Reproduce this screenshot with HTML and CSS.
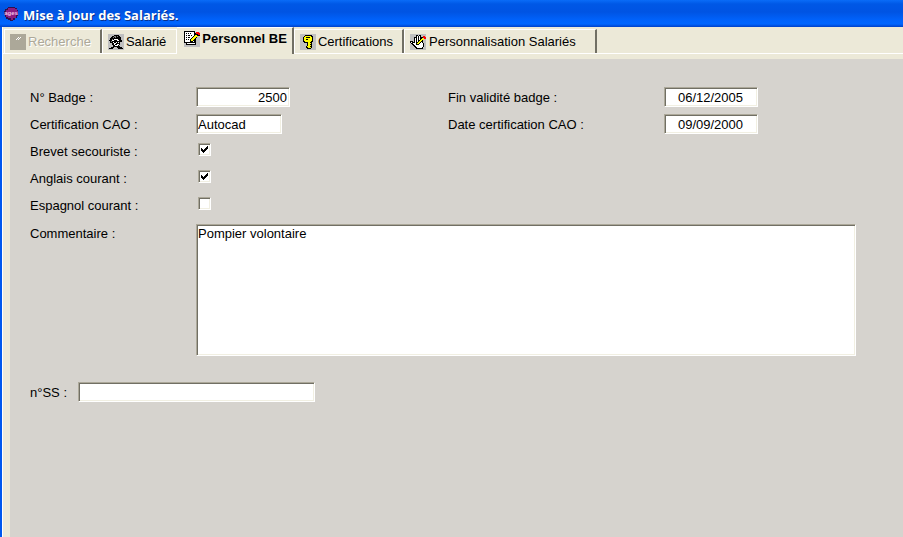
FILE: index.html
```html
<!DOCTYPE html>
<html lang="fr">
<head>
  <meta charset="UTF-8" />
  <meta name="viewport" content="width=device-width, initial-scale=1.0"/>
  <title>Mise à Jour des Salariés.</title>
  <link rel="stylesheet" href="styles.css">
</head>
<body>
  <header class="titlebar">
    <svg class="logo" viewBox="0 0 16 16" aria-hidden="true">
      <path fill="#30104c" d="M4 1h7v1h2v2h1v6h-1v2h-2v2H9v1H6v-1H4v-1H2v-2H1V9H0V5h1V3h2V2h1z"/>
      <path fill="#8c1c80" d="M4 2h7v1h2v2h1v4h-2v3H9v2H7v-2H4v-1H2V4h2z"/>
      <text class="logo-text" x="7" y="9" text-anchor="middle">ages</text>
    </svg>
    <h1>Mise à Jour des Salariés.</h1>
  </header>

  <div class="window">
    <!-- Tabs -->
    <nav class="tabs" role="tablist">
      <button class="tab" role="tab" disabled>
        <svg class="icon" viewBox="0 0 16 16" aria-hidden="true" shape-rendering="crispEdges">
          <path fill="#aca899" d="M0 0h16v16H0z"/>
          <path fill="#fff" d="M8 3h1v1H8zM7 4h1v1H7zM10 3h1v1h-1zM9 4h1v1H9zM6 5h1v1H6zM8 5h1v1H8z"/>
        </svg>
        <span>Recherche</span>
      </button>
      <button class="tab before-active" role="tab">
        <svg class="icon" viewBox="0 0 16 16" aria-hidden="true" shape-rendering="crispEdges">
          <path fill="#c0c0c0" d="M0 0h16v16H0z"/>
          <path d="M6 1h5v1h1v1h1v3h1v2h-2v3h-1v1h1v1h2v1h1v1h-5v-1H9v-1H6v1H5v1H1v-1h2v-1h2v-2H4V9H2V7H1V6h1V4h1V3h1V2h2z"/>
          <path fill="#808080" d="M6 2h2v1H6zM9 2h1v1H9zM5 3h1v1H5zM7 3h1v1H7zM3 7h1v1H3zM4 5h1v1H4z"/>
          <path fill="#fff" d="M4 7V6h2V5h4v1h1v1H9V6H6v1zM5 8h1v1H5zM8 8h1v1H8zM6 9h2v1h3v1h-1v1H7v-1H6zM10 8h1v1h-1z"/>
          <path d="M7 10h2v1H7z"/>
        </svg>
        <span>Salarié</span>
      </button>
      <button class="tab active" role="tab" aria-selected="true">
        <svg class="icon" viewBox="0 0 16 16" aria-hidden="true" shape-rendering="crispEdges">
          <path fill="#c0c0c0" d="M0 1h16v15H0z"/>
          <path d="M0 0h11v4h1v10H2v-2H0z"/>
          <path fill="#fff" d="M1 1h9v10H1zM3 12h8v1H3z"/>
          <path d="M2 2h1v1H2zM4 2h1v1H4zM6 2h1v1H6zM2 4h1v1H2zM4 4h2v1H4zM7 4h1v1H7zM2 6h1v1H2zM4 6h2v1H4zM2 8h1v1H2zM4 8h1v1H4z"/>
          <path d="M11 2h3v1h1v1h1v1h-2v1h-1v1h-1v1h-1v1h-1v1H9v1H6V8h1V7h1V6h1V5h1V4h1z"/>
          <path fill="#ff0" d="M11 4h2v1h1v1h-2v1h-1v1h-1v1H9v1H7V8h1V7h1V6h1V5h1z"/>
          <path fill="#f00" d="M12 1h3v1h1v2h-2V3h-2z"/>
        </svg>
        <span>Personnel BE</span>
      </button>
      <button class="tab" role="tab">
        <svg class="icon" viewBox="0 0 16 16" aria-hidden="true" shape-rendering="crispEdges">
          <path fill="#c0c0c0" d="M0 0h16v16H0z"/>
          <path d="M5 1h7v1h1v6h-1v6h-1v1H7v-1H6v-2h1V9H4V8H3V3h1V2h1z"/>
          <path fill="#ff0" d="M5 2h6v1h1v4h-1v7H8v-1H7v-1h1V8H5V7H4V3h1z"/>
          <path d="M6 3h4v1H6zM6 5h2v1H6zM10 8h1v1h-1zM10 10h1v1h-1zM10 12h1v1h-1z"/>
        </svg>
        <span>Certifications</span>
      </button>
      <button class="tab wide" role="tab">
        <svg class="icon" viewBox="0 0 16 16" aria-hidden="true" shape-rendering="crispEdges">
          <path fill="#c0c0c0" d="M0 0h16v16H0z"/>
          <path d="M6 1h2v1h1V1h2v2h2v6h1v4h-1v2H6v-1H5v-1H4v-1H3v-1H2v-1H1V9H0V7h3v1h1V3h2z"/>
          <path fill="#fff" d="M5 4h1v5h1V2h1v6h1V2h1v6h1V4h1v5h1v4h-1v1H7v-1H6v-1H5v-1H4v-1H3V9H1V8h1v1h3z"/>
          <path d="M14 5v1h-1v1h-1v1h-1v1h-1v1H9v1H6V9h1V8h1V7h1V6h1V5h1V4h1V3h1v2z"/>
          <path fill="#ff0" d="M12 4h1v1h1v1h-2v1h-1v1h-1v1H9v1H7V9h1V8h1V7h1V6h1V5h1z"/>
          <path fill="#f00" d="M13 2h2v1h1v2h-2V4h-1z"/>
        </svg>
        <span>Personnalisation Salariés</span>
      </button>
    </nav>

    <!-- Personnel BE form -->
    <main class="panel">
      <form>
        <div class="columns">
          <div class="column">
            <div class="row">
              <label for="badge">N° Badge :</label>
              <input class="field date right" type="text" id="badge" value="2500" />
            </div>
            <div class="row">
              <label for="cao">Certification CAO :</label>
              <input class="field short" type="text" id="cao" value="Autocad" />
            </div>
            <div class="row">
              <label for="secouriste">Brevet secouriste :</label>
              <input class="check" type="checkbox" id="secouriste" checked />
            </div>
            <div class="row">
              <label for="anglais">Anglais courant :</label>
              <input class="check" type="checkbox" id="anglais" checked />
            </div>
            <div class="row">
              <label for="espagnol">Espagnol courant :</label>
              <input class="check" type="checkbox" id="espagnol" />
            </div>
          </div>
          <div class="column second">
            <div class="row">
              <label for="finBadge">Fin validité badge :</label>
              <input class="field date center" type="text" id="finBadge" value="06/12/2005" />
            </div>
            <div class="row">
              <label for="dateCao">Date certification CAO :</label>
              <input class="field date center" type="text" id="dateCao" value="09/09/2000" />
            </div>
          </div>
        </div>
        <div class="row comment">
          <label for="commentaire">Commentaire :</label>
          <textarea class="field" id="commentaire" rows="8">Pompier volontaire</textarea>
        </div>
        <div class="row ss">
          <label for="nss">n°SS :</label>
          <input class="field" type="text" id="nss" />
        </div>
      </form>
    </main>
  </div>
</body>
</html>
```
FILE: styles.css
```css
* { box-sizing: border-box; }
body { margin: 0; min-height: 100vh; display: flex; flex-direction: column; background: #ece9d8; color: #000; font: 13px/16px "Liberation Sans", Arial, sans-serif; }
button, input, textarea { font: inherit; color: inherit; border-radius: 0; }
/* Title bar */
.titlebar { display: flex; align-items: center; gap: 3px; height: 27px; padding: 0 4px; background: linear-gradient(#0a6cf8 0, #0058e6 4px, #0054e3 12px, #0062fb 20px, #0066ff 24px, #0040c8 27px); }
.titlebar h1 { margin: 0; padding-top: 2px; color: #fff; font: bold 13px/16px "Open Sans", "Noto Sans", sans-serif; text-shadow: 1px 1px #0a318c; }
.logo { width: 16px; height: 16px; }
.logo-text { fill: #f0c0e8; font: bold 6px "Liberation Sans", sans-serif; }
.window { flex: 1; display: flex; flex-direction: column; border-left: 2px solid #0058ee; box-shadow: inset 1px 0 #fff; }
/* Tabs */
.tabs { display: flex; align-items: flex-end; height: 27px; padding-left: 2px; border-bottom: 1px solid #fff; }
.tab { display: flex; align-items: center; gap: 2px; height: 24px; padding: 0 9px 0 5px; background: #ece9d8; border: 0; border-top: 1px solid #fff; border-left: 1px solid #fff; border-right: 2px solid #716f64; white-space: nowrap; }
.tab:disabled { color: #aca899; text-shadow: 1px 1px #fff; }
.tab.before-active { padding-right: 10px; border-right: 1px solid #fff; }
.tab.active { height: 27px; margin-bottom: -1px; padding: 0 5px 4px 7px; border-left: 0; font-weight: bold; }
.tab.wide { gap: 3px; padding-right: 19px; }
.icon { width: 16px; height: 16px; flex: none; }
/* Form */
.panel { flex: 1; margin: 5px 0 0 8px; padding: 28px 47px 28px 20px; background: #d6d3ce; }
.columns { display: flex; }
.column { display: flex; flex-direction: column; flex: none; gap: 7px; width: 418px; }
.column.second { width: auto; }
.row { display: flex; align-items: center; height: 20px; }
.row label { width: 166px; flex: none; padding-top: 2px; }
.second .row label { width: 216px; }
.field { height: 20px; padding: 1px 2px 1px 1px; background: #fff; border: 1px solid; border-color: #aca899 #fff #fff #aca899; box-shadow: inset 1px 1px #716f64, inset -1px -1px #f1efe2; outline: 0; }
.date { width: 94px; }
.short { width: 86px; }
.right { text-align: right; }
.center { text-align: center; }
.check { appearance: none; width: 13px; height: 13px; margin: 0 0 3px 2px; background: #fff; border: 1px solid; border-color: #aca899 #fff #fff #aca899; box-shadow: inset 1px 1px #716f64, inset -1px -1px #f1efe2; }
.check:checked { background: #fff url("data:image/svg+xml,%3Csvg xmlns='http://www.w3.org/2000/svg' viewBox='0 0 7 7' shape-rendering='crispEdges'%3E%3Cpath d='M0 2h1v1h1v1h1V3h1V2h1V1h1V0h1v3H6v1H5v1H4v1H3v1H2V6H1V5H0z'/%3E%3C/svg%3E") center / 7px 7px no-repeat; }
.comment { align-items: flex-start; height: auto; margin-top: 9px; }
.comment textarea { flex: 1; height: auto; display: block; resize: none; overflow: hidden; }
.ss { margin-top: 26px; }
.ss label { width: 48px; }
.ss .field { width: 237px; }
```
